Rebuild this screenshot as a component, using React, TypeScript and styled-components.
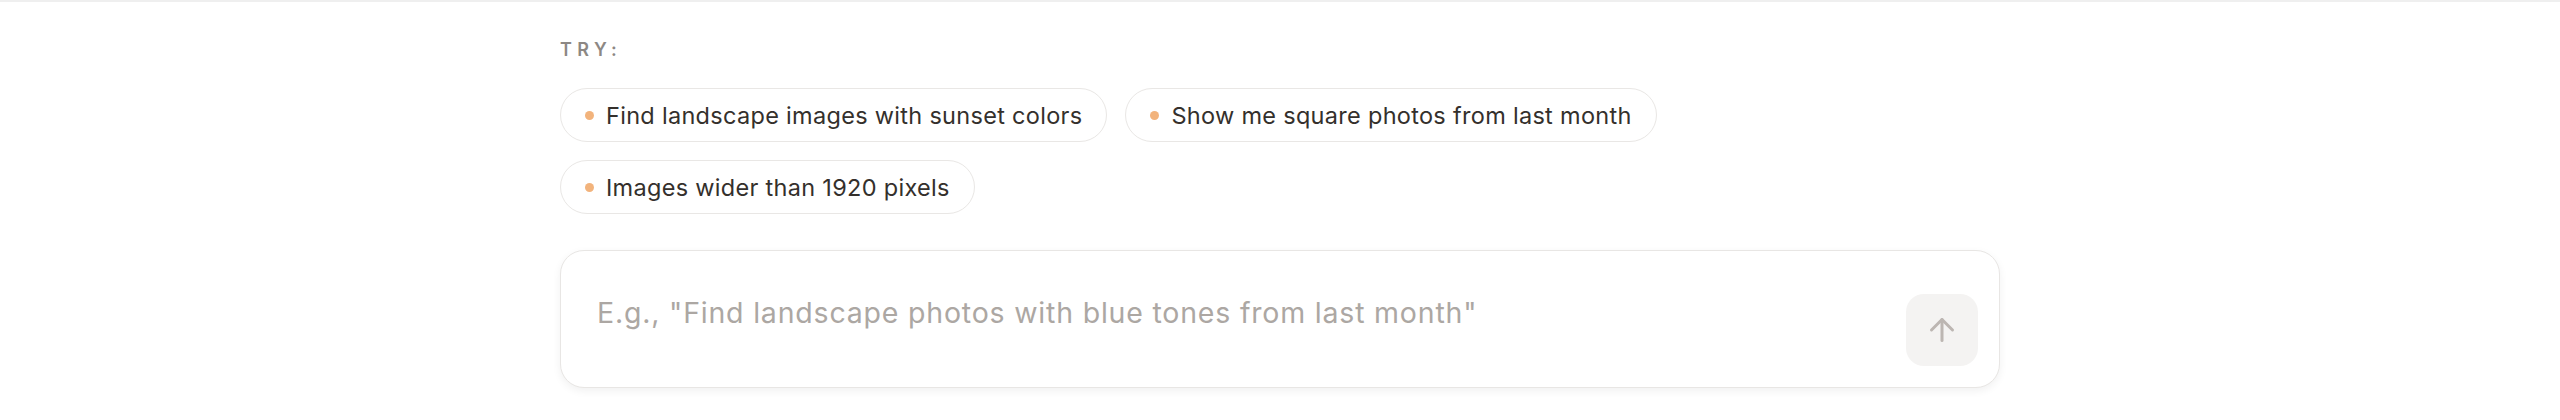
import React, { useState } from "react";
import styled, { createGlobalStyle } from "styled-components";
import { ArrowUp } from "lucide-react";

const GlobalStyle = createGlobalStyle`
  html, body {
    margin: 0;
    padding: 0;
    background: #ffffff;
    font-family: Inter, "Noto Sans", "Liberation Sans", sans-serif;
  }
  * {
    box-sizing: border-box;
  }
`;

const suggestions = [
  "Find landscape images with sunset colors",
  "Show me square photos from last month",
  "Images wider than 1920 pixels",
];

export default function App() {
  const [query, setQuery] = useState("");

  return (
    <>
      <GlobalStyle />
      <Page>
        <Content>
          <TryLabel>Try:</TryLabel>
          <ChipList>
            {suggestions.map((text) => (
              <Chip key={text} type="button" onClick={() => setQuery(text)}>
                <Dot />
                {text}
              </Chip>
            ))}
          </ChipList>
          <InputBox>
            <QueryInput
              rows={1}
              value={query}
              placeholder='E.g., "Find landscape photos with blue tones from last month"'
              onChange={(e) => setQuery(e.target.value)}
            />
            <SendButton type="button" disabled={!query}>
              <ArrowUp size={36} strokeWidth={2} />
            </SendButton>
          </InputBox>
        </Content>
      </Page>
    </>
  );
}

const Page = styled.div`
  border-top: 2px solid #efefef;
  min-height: 420px;
`;

const Content = styled.div`
  max-width: 1440px;
  margin: 0 auto;
  padding-top: 34px;
`;

const TryLabel = styled.div`
  font-size: 18px;
  line-height: 27px;
  font-weight: 600;
  letter-spacing: 5.4px;
  text-transform: uppercase;
  color: #8d8884;
  margin-bottom: 25px;
`;

const ChipList = styled.div`
  display: flex;
  flex-wrap: wrap;
  gap: 18px;
  max-width: 1140px;
`;

const Chip = styled.button`
  display: inline-flex;
  align-items: center;
  gap: 12px;
  height: 54px;
  padding: 0 24px;
  border: 1.5px solid #e9e7e5;
  border-radius: 999px;
  background: #ffffff;
  font-family: inherit;
  font-size: 23.5px;
  letter-spacing: 0.3px;
  color: #34302c;
  cursor: pointer;
`;

const Dot = styled.span`
  width: 9px;
  height: 9px;
  border-radius: 50%;
  background: #f2b37c;
  flex-shrink: 0;
`;

const InputBox = styled.div`
  display: flex;
  align-items: flex-end;
  gap: 24px;
  height: 138px;
  margin-top: 36px;
  padding: 0 21px 21px 36px;
  border: 1.5px solid #e8e6e4;
  border-radius: 24px;
  background: #ffffff;
  box-shadow: 0 3px 9px rgba(0, 0, 0, 0.06);
`;

const QueryInput = styled.textarea`
  flex: 1;
  align-self: stretch;
  padding: 42px 0 0;
  border: none;
  outline: none;
  resize: none;
  background: transparent;
  font-family: inherit;
  font-size: 28.5px;
  line-height: 40.5px;
  letter-spacing: 0.8px;
  color: #34302c;

  &::placeholder {
    color: #aca7a3;
  }
`;

const SendButton = styled.button`
  display: flex;
  align-items: center;
  justify-content: center;
  width: 72px;
  height: 72px;
  flex-shrink: 0;
  border: none;
  border-radius: 18px;
  background: #f4f3f2;
  color: #bcb6b2;
  cursor: pointer;

  &:disabled {
    cursor: default;
  }
`;
